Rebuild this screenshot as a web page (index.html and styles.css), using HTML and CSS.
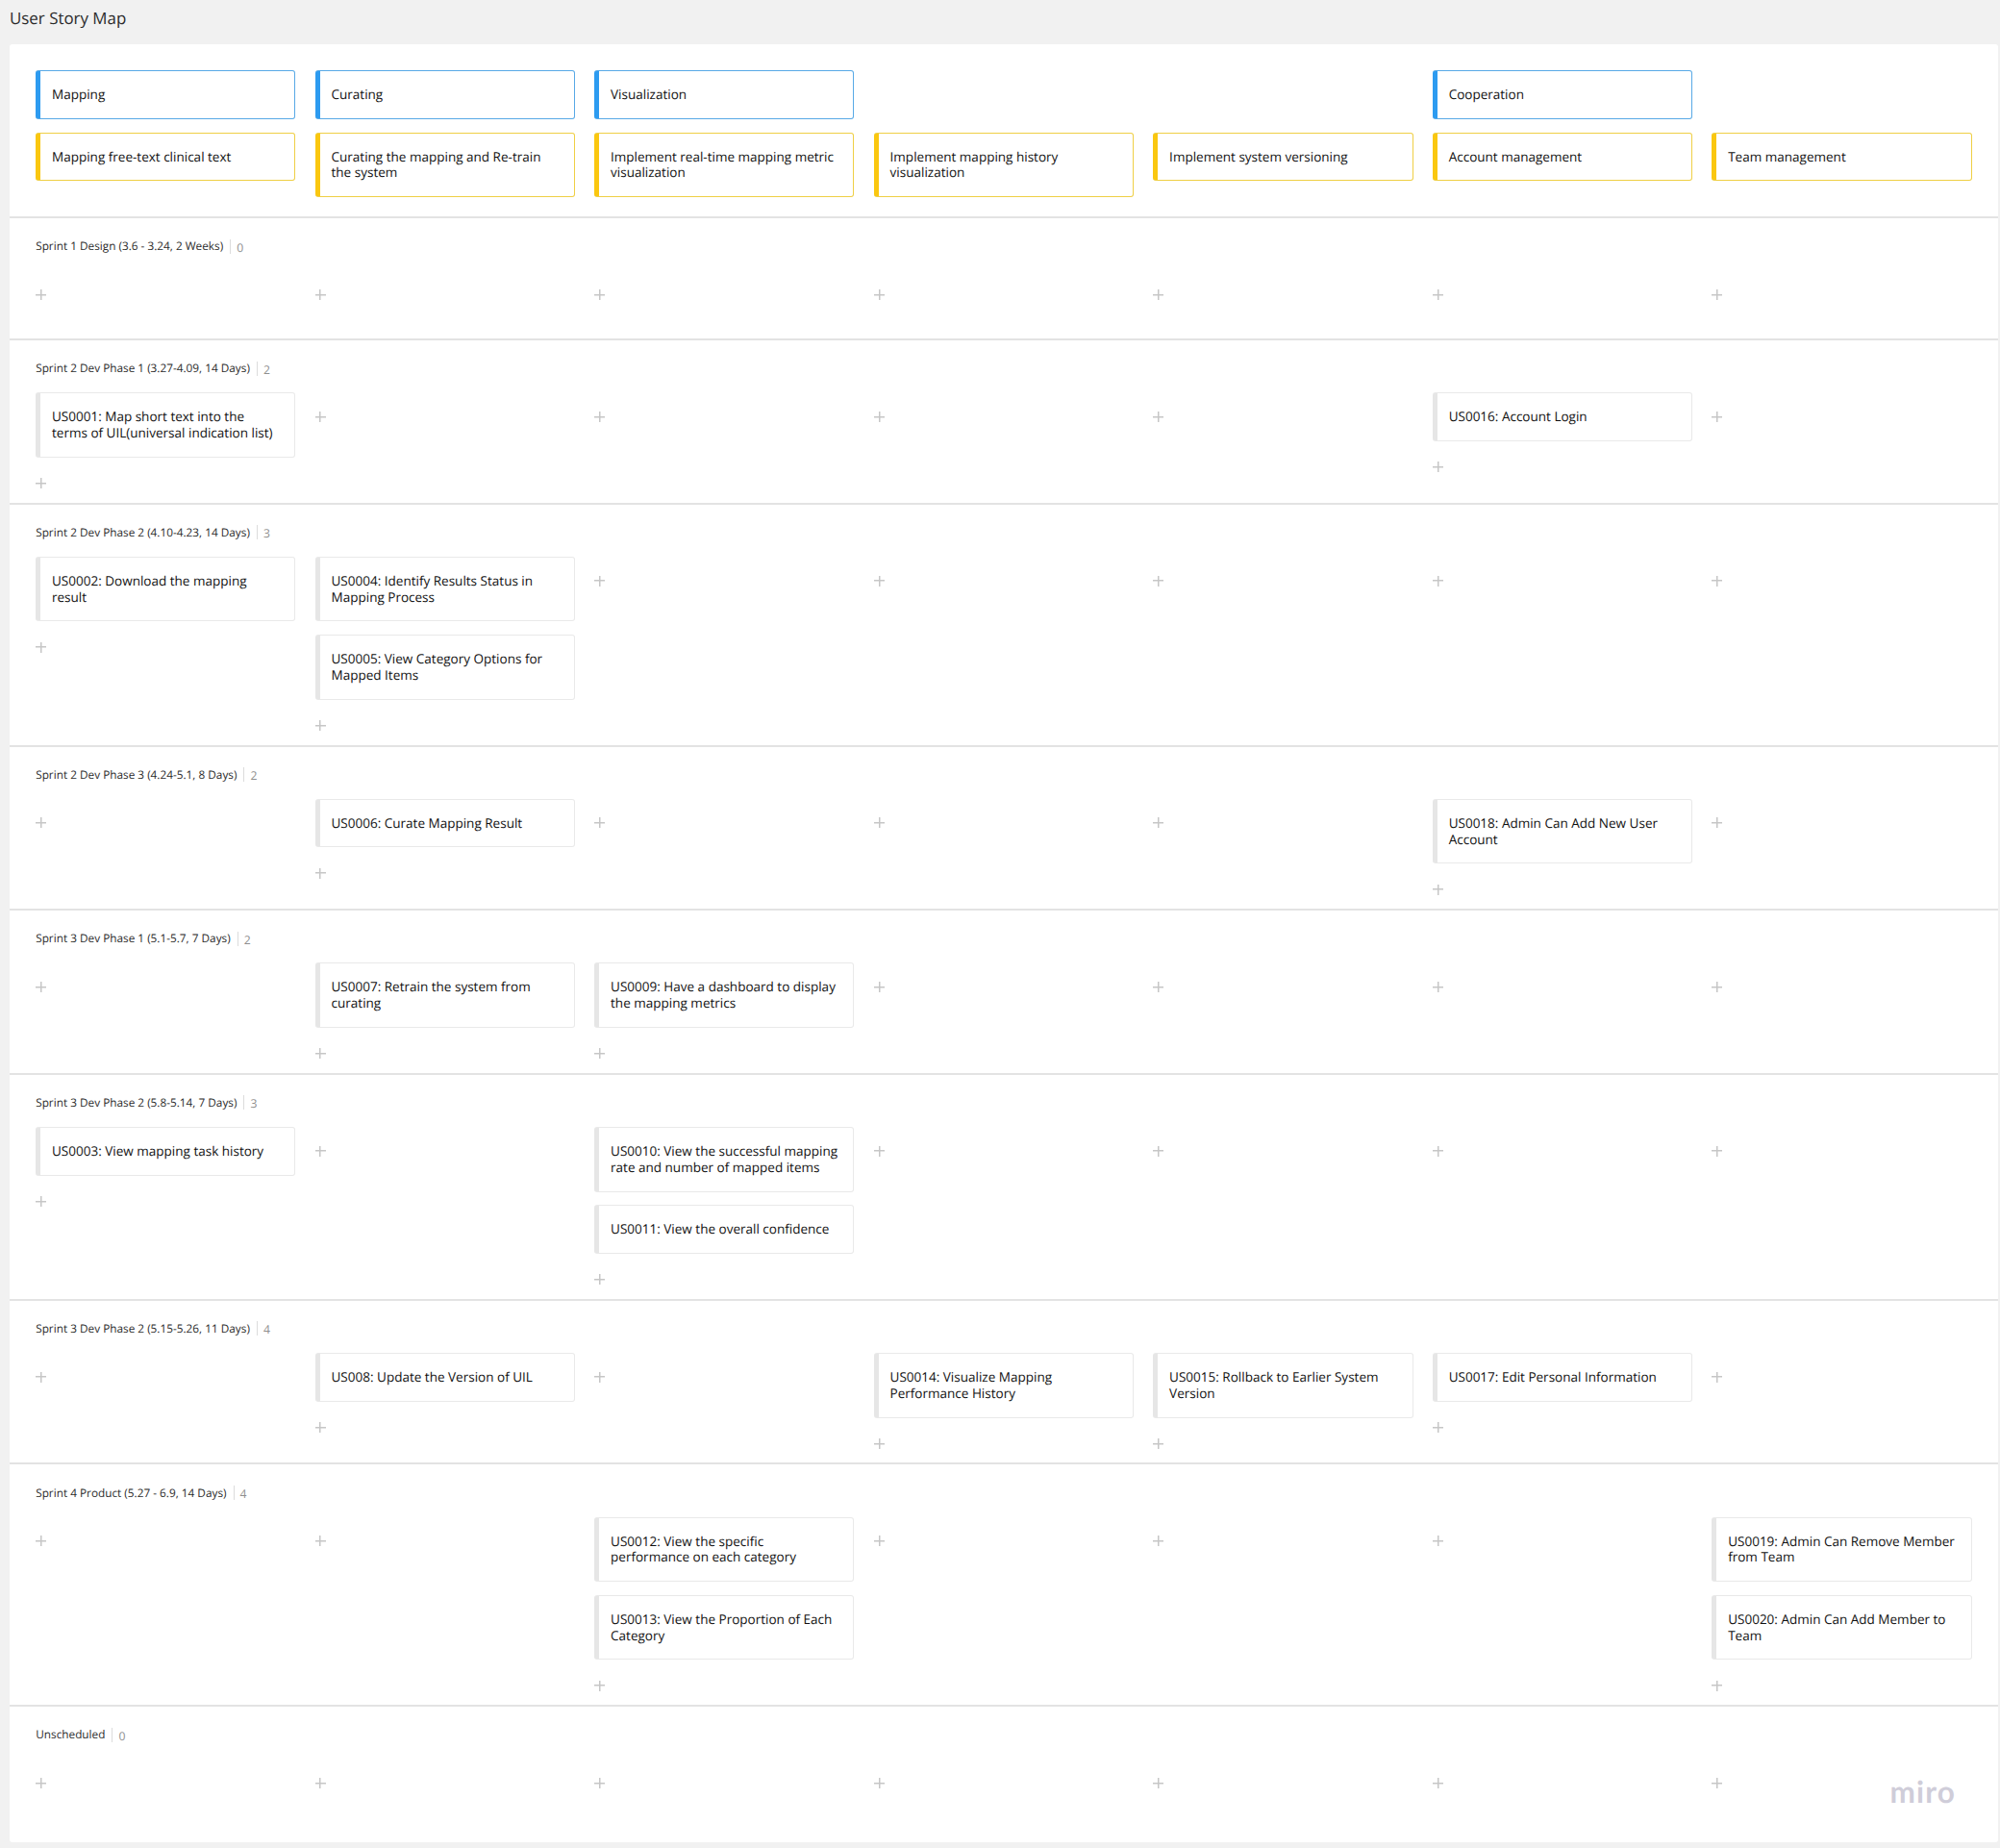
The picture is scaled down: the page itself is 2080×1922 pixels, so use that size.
FILE: index.html
```html
<!DOCTYPE html>
<html lang="en">
<head>
<meta charset="utf-8">
<title>User Story Map</title>
<link rel="stylesheet" href="styles.css">
</head>
<body>
<h1 class="page-title">User Story Map</h1>
<main class="board">
  <header class="backbone">
    <div class="grid">
      <div class="card activity">Mapping</div>
      <div class="card activity">Curating</div>
      <div class="card activity">Visualization</div>
      <div></div>
      <div></div>
      <div class="card activity">Cooperation</div>
      <div></div>
    </div>
    <div class="grid">
      <div class="card step">Mapping free-text clinical text</div>
      <div class="card step">Curating the mapping and Re-train the system</div>
      <div class="card step">Implement real-time mapping metric visualization</div>
      <div class="card step">Implement mapping history visualization</div>
      <div class="card step">Implement system versioning</div>
      <div class="card step">Account management</div>
      <div class="card step">Team management</div>
    </div>
  </header>

  <section class="release">
    <h2 class="release-title">Sprint 1 Design (3.6 - 3.24, 2 Weeks)<span class="count">0</span></h2>
    <div class="grid">
      <div class="cell"><i class="add"></i></div>
      <div class="cell"><i class="add"></i></div>
      <div class="cell"><i class="add"></i></div>
      <div class="cell"><i class="add"></i></div>
      <div class="cell"><i class="add"></i></div>
      <div class="cell"><i class="add"></i></div>
      <div class="cell"><i class="add"></i></div>
    </div>
  </section>

  <section class="release">
    <h2 class="release-title">Sprint 2 Dev Phase 1 (3.27-4.09, 14 Days)<span class="count">2</span></h2>
    <div class="grid">
      <div class="cell"><div class="card">US0001: Map short text into the terms of UIL(universal indication list)</div><i class="add"></i></div>
      <div class="cell"><i class="add"></i></div>
      <div class="cell"><i class="add"></i></div>
      <div class="cell"><i class="add"></i></div>
      <div class="cell"><i class="add"></i></div>
      <div class="cell"><div class="card">US0016: Account Login</div><i class="add"></i></div>
      <div class="cell"><i class="add"></i></div>
    </div>
  </section>

  <section class="release">
    <h2 class="release-title">Sprint 2 Dev Phase 2 (4.10-4.23, 14 Days)<span class="count">3</span></h2>
    <div class="grid">
      <div class="cell"><div class="card">US0002: Download the mapping result</div><i class="add"></i></div>
      <div class="cell"><div class="card">US0004: Identify Results Status in Mapping Process</div><div class="card">US0005: View Category Options for Mapped Items</div><i class="add"></i></div>
      <div class="cell"><i class="add"></i></div>
      <div class="cell"><i class="add"></i></div>
      <div class="cell"><i class="add"></i></div>
      <div class="cell"><i class="add"></i></div>
      <div class="cell"><i class="add"></i></div>
    </div>
  </section>

  <section class="release">
    <h2 class="release-title">Sprint 2 Dev Phase 3 (4.24-5.1, 8 Days)<span class="count">2</span></h2>
    <div class="grid">
      <div class="cell"><i class="add"></i></div>
      <div class="cell"><div class="card">US0006: Curate Mapping Result</div><i class="add"></i></div>
      <div class="cell"><i class="add"></i></div>
      <div class="cell"><i class="add"></i></div>
      <div class="cell"><i class="add"></i></div>
      <div class="cell"><div class="card">US0018: Admin Can Add New User Account</div><i class="add"></i></div>
      <div class="cell"><i class="add"></i></div>
    </div>
  </section>

  <section class="release">
    <h2 class="release-title">Sprint 3 Dev Phase 1 (5.1-5.7, 7 Days)<span class="count">2</span></h2>
    <div class="grid">
      <div class="cell"><i class="add"></i></div>
      <div class="cell"><div class="card">US0007: Retrain the system from curating</div><i class="add"></i></div>
      <div class="cell"><div class="card">US0009: Have a dashboard to display the mapping metrics</div><i class="add"></i></div>
      <div class="cell"><i class="add"></i></div>
      <div class="cell"><i class="add"></i></div>
      <div class="cell"><i class="add"></i></div>
      <div class="cell"><i class="add"></i></div>
    </div>
  </section>

  <section class="release">
    <h2 class="release-title">Sprint 3 Dev Phase 2 (5.8-5.14, 7 Days)<span class="count">3</span></h2>
    <div class="grid">
      <div class="cell"><div class="card">US0003: View mapping task history</div><i class="add"></i></div>
      <div class="cell"><i class="add"></i></div>
      <div class="cell"><div class="card">US0010: View the successful mapping rate and number of mapped items</div><div class="card">US0011: View the overall confidence</div><i class="add"></i></div>
      <div class="cell"><i class="add"></i></div>
      <div class="cell"><i class="add"></i></div>
      <div class="cell"><i class="add"></i></div>
      <div class="cell"><i class="add"></i></div>
    </div>
  </section>

  <section class="release">
    <h2 class="release-title">Sprint 3 Dev Phase 2 (5.15-5.26, 11 Days)<span class="count">4</span></h2>
    <div class="grid">
      <div class="cell"><i class="add"></i></div>
      <div class="cell"><div class="card">US008: Update the Version of UIL</div><i class="add"></i></div>
      <div class="cell"><i class="add"></i></div>
      <div class="cell"><div class="card">US0014: Visualize Mapping Performance History</div><i class="add"></i></div>
      <div class="cell"><div class="card">US0015: Rollback to Earlier System Version</div><i class="add"></i></div>
      <div class="cell"><div class="card">US0017: Edit Personal Information</div><i class="add"></i></div>
      <div class="cell"><i class="add"></i></div>
    </div>
  </section>

  <section class="release">
    <h2 class="release-title">Sprint 4 Product (5.27 - 6.9, 14 Days)<span class="count">4</span></h2>
    <div class="grid">
      <div class="cell"><i class="add"></i></div>
      <div class="cell"><i class="add"></i></div>
      <div class="cell"><div class="card">US0012: View the specific performance on each category</div><div class="card">US0013: View the Proportion of Each Category</div><i class="add"></i></div>
      <div class="cell"><i class="add"></i></div>
      <div class="cell"><i class="add"></i></div>
      <div class="cell"><i class="add"></i></div>
      <div class="cell"><div class="card">US0019: Admin Can Remove Member from Team</div><div class="card">US0020: Admin Can Add Member to Team</div><i class="add"></i></div>
    </div>
  </section>

  <section class="release">
    <h2 class="release-title">Unscheduled<span class="count">0</span></h2>
    <div class="grid">
      <div class="cell"><i class="add"></i></div>
      <div class="cell"><i class="add"></i></div>
      <div class="cell"><i class="add"></i></div>
      <div class="cell"><i class="add"></i></div>
      <div class="cell"><i class="add"></i></div>
      <div class="cell"><i class="add"></i></div>
      <div class="cell"><i class="add"></i></div>
    </div>
  </section>
  <div class="brand">miro</div>
</main>
</body>
</html>
```
FILE: styles.css
```css
* { box-sizing: border-box; }

body {
  margin: 0;
  padding: 0 2px 0 10px;
  height: 1922px;
  overflow: hidden;
  background: #f1f1f1;
  color: #111;
  font-family: "Open Sans", "Noto Sans", sans-serif;
  text-rendering: geometricPrecision;
}

.page-title {
  margin: 0;
  height: 46px;
  padding-top: 8px;
  font-size: 16.9px;
  font-weight: 400;
  line-height: 22px;
  color: #2b2b2b;
}

.board {
  position: relative;
  height: 1870px;
  background: #fff;
  border-radius: 3px;
}

.backbone {
  height: 179.2px;
  padding-top: 27px;
  display: flex;
  flex-direction: column;
  gap: 14px;
}

.grid {
  display: grid;
  grid-template-columns: repeat(7, 270.2px);
  column-gap: 20.35px;
  align-items: start;
  padding-left: 27.2px;
}

.card {
  padding: 15.9px 15px 15.9px 16.8px;
  border: 1px solid #e9e9e9;
  border-left: 0;
  border-radius: 3px;
  background: linear-gradient(90deg, #e6e6e6 5px, transparent 5px);
  font-size: 13.52px;
  line-height: 16.9px;
}
.card.activity {
  border-color: #58a9e6;
  background: linear-gradient(90deg, #2d9bf0 5px, transparent 5px);
}
.card.step {
  border-color: #efcf45;
  background: linear-gradient(90deg, #fac710 5px, transparent 5px);
}

.release {
  min-height: 126.8px;
  border-top: 2px solid #e3e3e3;
}

.release-title {
  display: flex;
  align-items: center;
  height: 54.2px;
  margin: 0;
  padding: 4px 0 0 27.2px;
  font-size: 11.8px;
  font-weight: 400;
  color: #2b2b2b;
}

.count {
  margin-left: 7px;
  padding: 3px 0 0 6px;
  border-left: 1px solid #dcdcdc;
  font-size: 12.2px;
  line-height: 12px;
  color: #8f8f8f;
}

.cell {
  display: flex;
  flex-direction: column;
  gap: 13.6px;
}

.add {
  width: 11px;
  height: 33.3px;
  background:
    linear-gradient(#c6c6c6, #c6c6c6) center 12.4px / 11px 1.5px no-repeat,
    linear-gradient(#c6c6c6, #c6c6c6) center 7.7px / 1.5px 11px no-repeat;
}
.add:first-child { margin-top: 12px; }

.brand {
  position: absolute;
  right: 44px;
  bottom: 33px;
  font-family: Lato, sans-serif;
  font-weight: 700;
  font-size: 31.5px;
  line-height: 40px;
  letter-spacing: 1.2px;
  color: #cfcdd9;
}
```
